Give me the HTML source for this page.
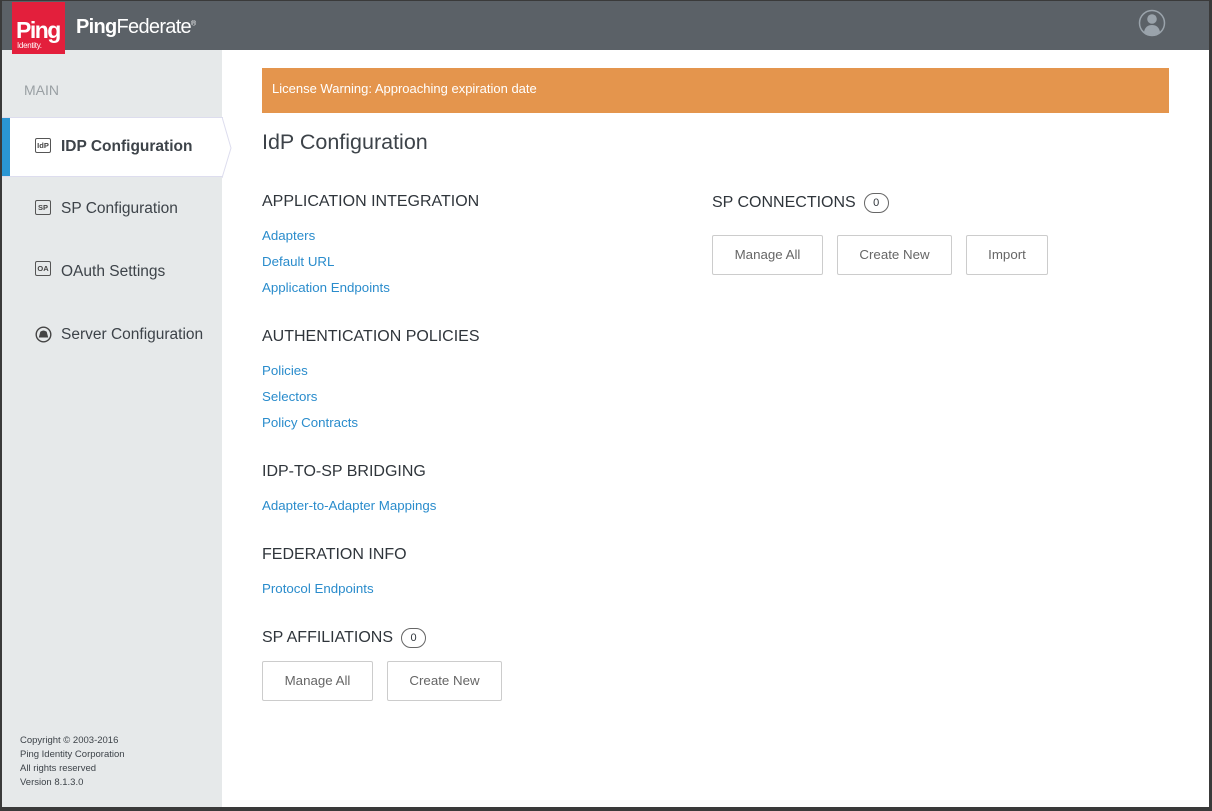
<!DOCTYPE html>
<html><head><style>
*{margin:0;padding:0;box-sizing:border-box}
body{width:1212px;height:811px;overflow:hidden;background:#3a3a3a;font-family:"Liberation Sans",sans-serif;position:relative}
#frame{position:absolute;left:2px;top:1px;width:1207px;height:806px;background:#fff;overflow:hidden}
#hdr{position:absolute;left:0;top:0;width:100%;height:49px;background:#5b6167}
#logo{position:absolute;left:10px;top:1px;width:53px;height:52px;background:#e31f3c;color:#fff;z-index:3}
#logo .p{position:absolute;left:4px;top:15px;font-size:23px;font-weight:bold;letter-spacing:-1.5px}
#logo .i{position:absolute;left:5px;top:39px;font-size:8px;letter-spacing:-0.3px}
#pf{position:absolute;left:74px;top:15px;color:#fff;font-size:20px;letter-spacing:-0.7px}
#pf b{font-weight:bold}
#side{position:absolute;left:0;top:49px;width:220px;height:757px;background:#e6e9ea}
#main{position:absolute;left:220px;top:49px;right:0;bottom:0;background:#fff}
.mainlbl{position:absolute;left:22px;top:32px;color:#9aa0a4;font-size:14px}
.nav{position:absolute;left:0;width:220px;height:60px;color:#3d4349;font-size:15.5px}
.nav .t{position:absolute;left:59px;top:20px}
.nav .ic{position:absolute;left:33px;top:20px;width:16px;height:15px;border:1.3px solid #555;border-radius:2px;font-size:7.5px;font-weight:bold;text-align:center;line-height:13px;color:#444}
.act{background:#fff;border-top:1px solid #dde;border-bottom:1px solid #dde;width:221px}
.act:before{content:"";position:absolute;left:0;top:0;width:8px;height:100%;background:#2a96d3}
.copy{position:absolute;left:18px;top:684px;font-size:9.5px;line-height:14px;color:#3d4349}
#warn{position:absolute;left:260px;top:67px;width:907px;height:45px;background:#e4954d;color:#fff;font-size:13px;padding:13px 10px}
h1{position:absolute;left:260px;top:129px;font-size:21.5px;font-weight:normal;color:#3d4349}
.h{position:absolute;font-size:16px;color:#2f353b}
.l{position:absolute;font-size:13.3px;color:#2a8ccc}
.badge{display:inline-block;margin-left:8px;width:25px;height:20px;border:1px solid #666;border-radius:10px;font-size:11px;text-align:center;line-height:18px;vertical-align:1px}
.btn{position:absolute;height:40px;border:1px solid #ccc;border-radius:2px;color:#666;font-size:13.3px;text-align:center;line-height:38px;background:#fff}
</style></head><body>
<div id="frame">
<div id="hdr">
<div id="pf"><b>Ping</b>Federate<sup style="font-size:7px">®</sup></div>
<svg style="position:absolute;left:1136px;top:8px" width="28" height="28" viewBox="0 0 28 28"><circle cx="14" cy="14" r="12.5" fill="none" stroke="#9aa3ab" stroke-width="1.5"/><circle cx="14" cy="10" r="4.8" fill="#9aa3ab"/><path d="M6 23c1-5 4-7 8-7s7 2 8 7a12 12 0 0 1-16 0z" fill="#9aa3ab"/></svg>
</div>
<div id="logo"><span class="p">Ping</span><span class="i">Identity.</span></div>
<div id="side">
<div class="mainlbl">MAIN</div>
<div class="nav act" style="top:67px"><div class="ic">IdP</div><div class="t" style="font-weight:bold">IDP Configuration</div>
<svg style="position:absolute;left:220px;top:-1px" width="10" height="62"><path d="M0 0L9 31L0 61" fill="#fff" stroke="#dde"/></svg></div>
<div class="nav" style="top:130px"><div class="ic">SP</div><div class="t">SP Configuration</div></div>
<div class="nav" style="top:193px"><div class="ic" style="top:18px">OA</div><div class="t">OAuth Settings</div></div>
<div class="nav" style="top:256px"><svg style="position:absolute;left:33px;top:20px" width="17" height="17"><circle cx="8.5" cy="8.5" r="7.3" fill="none" stroke="#444" stroke-width="1.4"/><path d="M3.8 11.5L5.3 5.8Q8.5 3.2 11.7 5.8L13.2 11.5z" fill="#444"/></svg><div class="t">Server Configuration</div></div>
<div class="copy">Copyright © 2003-2016<br>Ping Identity Corporation<br>All rights reserved<br>Version 8.1.3.0</div>
</div>
<div id="warn" style="left:260px">License Warning: Approaching expiration date</div>
<h1>IdP Configuration</h1>
<div class="h" style="left:260px;top:192px">APPLICATION INTEGRATION</div>
<div class="l" style="left:260px;top:227px">Adapters</div>
<div class="l" style="left:260px;top:253px">Default URL</div>
<div class="l" style="left:260px;top:279px">Application Endpoints</div>
<div class="h" style="left:260px;top:327px">AUTHENTICATION POLICIES</div>
<div class="l" style="left:260px;top:362px">Policies</div>
<div class="l" style="left:260px;top:388px">Selectors</div>
<div class="l" style="left:260px;top:414px">Policy Contracts</div>
<div class="h" style="left:260px;top:462px">IDP-TO-SP BRIDGING</div>
<div class="l" style="left:260px;top:497px">Adapter-to-Adapter Mappings</div>
<div class="h" style="left:260px;top:545px">FEDERATION INFO</div>
<div class="l" style="left:260px;top:580px">Protocol Endpoints</div>
<div class="h" style="left:260px;top:627px">SP AFFILIATIONS<span class="badge">0</span></div>
<div class="btn" style="left:260px;top:660px;width:111px">Manage All</div>
<div class="btn" style="left:385px;top:660px;width:115px">Create New</div>
<div class="h" style="left:710px;top:192px">SP CONNECTIONS<span class="badge">0</span></div>
<div class="btn" style="left:710px;top:234px;width:111px">Manage All</div>
<div class="btn" style="left:835px;top:234px;width:115px">Create New</div>
<div class="btn" style="left:964px;top:234px;width:82px">Import</div>
</div>
</body></html>
